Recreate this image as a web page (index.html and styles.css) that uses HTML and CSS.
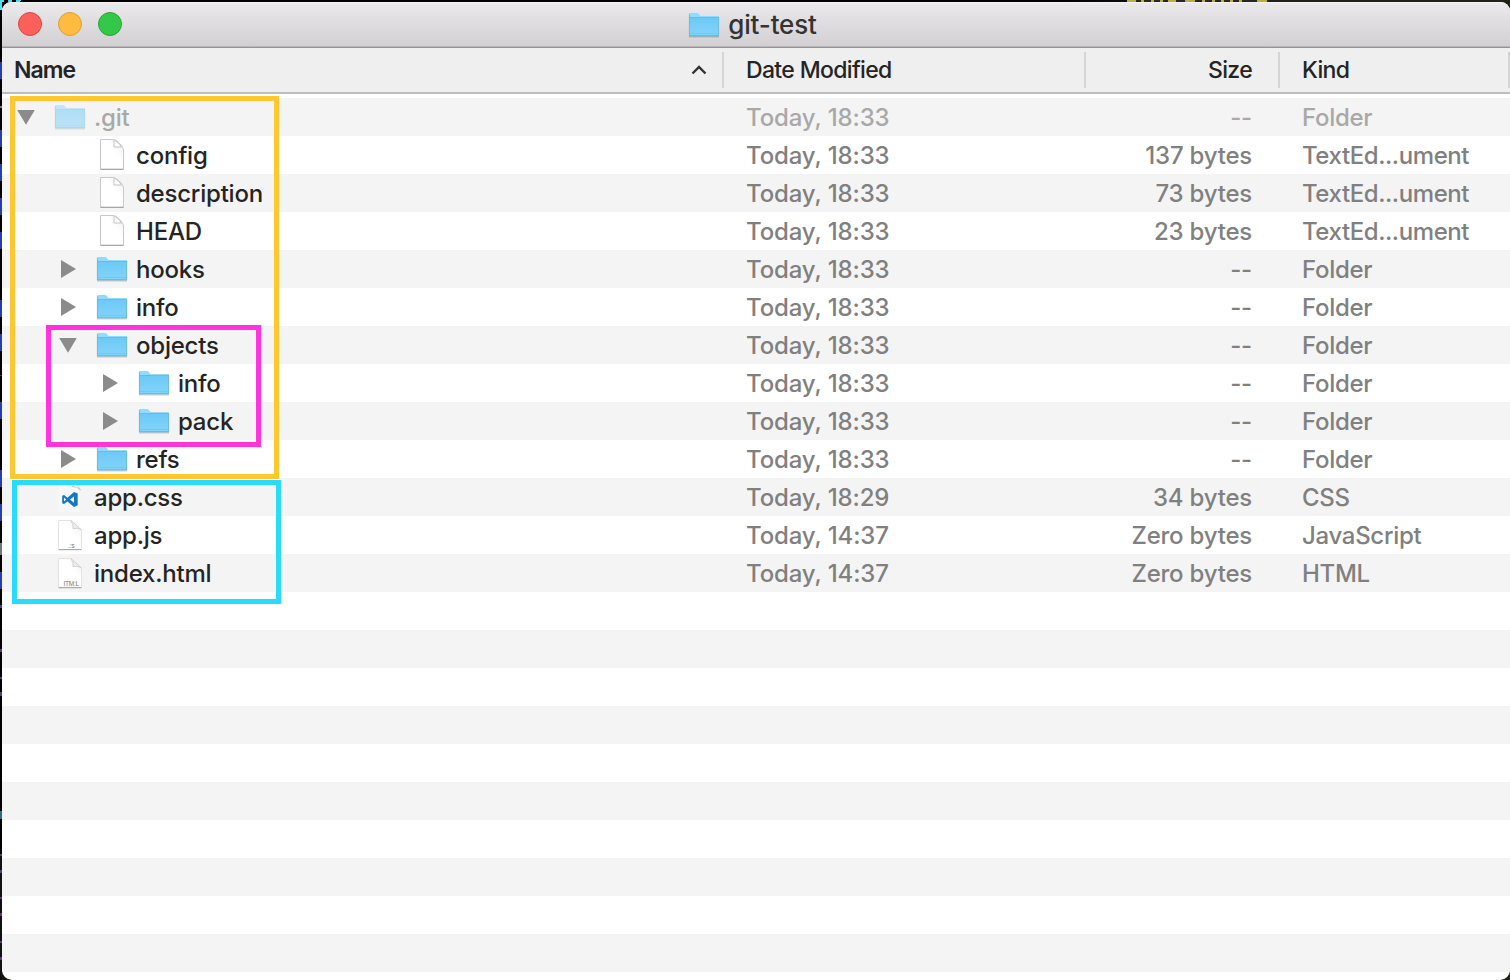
FILE: index.html
```
<!DOCTYPE html>
<html lang="en">
<head>
<meta charset="utf-8">
<title>git-test</title>
<link rel="stylesheet" href="styles.css">
</head>
<body>
<svg width="0" height="0" class="defs">
  <defs>
    <linearGradient id="fill" x1="0" y1="0" x2="0" y2="1"><stop offset="0" stop-color="#6dc9f6"/><stop offset="1" stop-color="#81d4fa"/></linearGradient>
    <linearGradient id="paper" x1="0" y1="1" x2="1" y2="0"><stop offset="0.6" stop-color="#fff"/><stop offset="1" stop-color="#f0f0f0"/></linearGradient>
    <symbol id="folder" viewBox="0 0 32 28">
      <path d="M1 25.8h30" stroke="#000" stroke-opacity=".16" stroke-width="1.6"/>
      <path d="M1 3.2Q1 2 2.2 2H9q1 0 1.700.8L12 4.400q.5.500 1.300.500H29.800Q31 4.900 31 6V24.500H1z" fill="#93dafb"/>
      <path d="M1 6.600H31V24.500H1z" fill="url(#fill)"/>
      <path d="M1 6.500H31" stroke="#62bdea"/>
      <path d="M1.300 22.500h29.400" stroke="#6fc6ee" stroke-width=".8"/>
      <path d="M1 24.800H31" stroke="#58add4"/>
      <path d="M1.400 3v21.500M30.600 6v18.500" stroke="#64b7df" stroke-width=".8"/>
    </symbol>
    <symbol id="file" viewBox="0 0 26 34">
      <path d="M1.500 1.500H14.500C18 2 24.500 8.500 24.500 12V31H1.500z" fill="url(#paper)" stroke="#c9c9c9"/>
      <path d="M1.500 31.500H24.500" stroke="#a6a6a6"/>
      <path d="M15 2V9h7.500C20.500 6 17.500 3 15 2z" fill="#fff" stroke="#c4c4c4"/>
    </symbol>
    <symbol id="page" viewBox="0 0 26 34">
      <path d="M1.500 2H14.500L24.500 11.500V31.500H1.500z" fill="url(#paper)"/>
      <path d="M1.500 31V3M24.500 11v20" stroke="#ddd" stroke-width=".8"/>
      <path d="M1.500 2.500H14" stroke="#e3e3e3"/>
      <path d="M1.500 31.700H24.500" stroke="#999"/>
      <path d="M14 2.500 24 11.500Q20 9.500 16 10.500 17 7 14 2.500z" fill="#ededed" stroke="#c9c9c9" stroke-width=".8"/>
    </symbol>
    <symbol id="right" viewBox="0 0 18 20"><path d="M2 1 17 10 2 19z" fill="#8b8b8b"/></symbol>
    <symbol id="down" viewBox="0 0 18 20"><path d="M.2 3H17.800L9 17.800z" fill="#8b8b8b"/></symbol>
  </defs>
</svg>
<div class="desktop">
  <i class="frag f1"></i><i class="frag f2"></i>
  <main class="window">
    <header class="titlebar">
      <div class="lights"><span class="light red"></span><span class="light amber"></span><span class="light green"></span></div>
      <h1 class="title"><svg class="folder"><use href="#folder"/></svg><span>git-test</span></h1>
    </header>
    <div class="grid heads">
      <div class="head sorted"><span>Name</span><svg class="caret" viewBox="0 0 16 10"><path d="M1.500 8.500 8 2l6.500 6.500" fill="none" stroke="#333" stroke-width="2.400"/></svg></div>
      <div class="head"><span class="hd">Date Modified</span></div>
      <div class="head num"><span class="hd">Size</span></div>
      <div class="head"><span class="hd">Kind</span></div>
    </div>
    <div class="rows">
      <div class="grid row dim"><div class="name"><svg class="tri"><use href="#down"/></svg><svg class="folder"><use href="#folder"/></svg><span>.git</span></div><div class="date">Today, 18:33</div><div class="num">--</div><div class="kind">Folder</div></div>
      <div class="grid row"><div class="name d1"><i class="tri"></i><svg class="file"><use href="#file"/></svg><span>config</span></div><div class="date">Today, 18:33</div><div class="num">137 bytes</div><div class="kind doc">TextEd...ument</div></div>
      <div class="grid row"><div class="name d1"><i class="tri"></i><svg class="file"><use href="#file"/></svg><span>description</span></div><div class="date">Today, 18:33</div><div class="num">73 bytes</div><div class="kind doc">TextEd...ument</div></div>
      <div class="grid row"><div class="name d1"><i class="tri"></i><svg class="file"><use href="#file"/></svg><span>HEAD</span></div><div class="date">Today, 18:33</div><div class="num">23 bytes</div><div class="kind doc">TextEd...ument</div></div>
      <div class="grid row"><div class="name d1"><svg class="tri"><use href="#right"/></svg><svg class="folder"><use href="#folder"/></svg><span>hooks</span></div><div class="date">Today, 18:33</div><div class="num">--</div><div class="kind">Folder</div></div>
      <div class="grid row"><div class="name d1"><svg class="tri"><use href="#right"/></svg><svg class="folder"><use href="#folder"/></svg><span>info</span></div><div class="date">Today, 18:33</div><div class="num">--</div><div class="kind">Folder</div></div>
      <div class="grid row"><div class="name d1"><svg class="tri"><use href="#down"/></svg><svg class="folder"><use href="#folder"/></svg><span>objects</span></div><div class="date">Today, 18:33</div><div class="num">--</div><div class="kind">Folder</div></div>
      <div class="grid row"><div class="name d2"><svg class="tri"><use href="#right"/></svg><svg class="folder"><use href="#folder"/></svg><span>info</span></div><div class="date">Today, 18:33</div><div class="num">--</div><div class="kind">Folder</div></div>
      <div class="grid row"><div class="name d2"><svg class="tri"><use href="#right"/></svg><svg class="folder"><use href="#folder"/></svg><span>pack</span></div><div class="date">Today, 18:33</div><div class="num">--</div><div class="kind">Folder</div></div>
      <div class="grid row"><div class="name d1"><svg class="tri"><use href="#right"/></svg><svg class="folder"><use href="#folder"/></svg><span>refs</span></div><div class="date">Today, 18:33</div><div class="num">--</div><div class="kind">Folder</div></div>
      <div class="grid row"><div class="name"><i class="tri"></i><svg class="file" viewBox="0 0 26 34"><path d="M1.500 5h22v26.500h-22z" fill="#fafafa" opacity=".5"/><path d="M15 6.500Q20 6 23.500 10L20 5H17z" fill="#fff" stroke="#b5b5b5" stroke-width=".7"/><path fill="#1278c4" fill-rule="evenodd" d="M17 12 20.700 13.600V25.300L17 27 10.500 21.500 7 24 5.200 23.200V15.800L7 15 10.500 17.700zM17 16.500 13 19.600 17 22.700zM7 17.500V21.500L9.100 19.500z"/></svg><span>app.css</span></div><div class="date">Today, 18:29</div><div class="num">34 bytes</div><div class="kind">CSS</div></div>
      <div class="grid row"><div class="name"><i class="tri"></i><svg class="file" viewBox="0 0 26 34"><use href="#page"/><text x="11" y="29.500" class="tag">.:s</text></svg><span>app.js</span></div><div class="date">Today, 14:37</div><div class="num">Zero bytes</div><div class="kind">JavaScript</div></div>
      <div class="grid row"><div class="name"><i class="tri"></i><svg class="file" viewBox="0 0 26 34"><use href="#page"/><text x="6.500" y="29.800" class="tag">ITM:L</text></svg><span>index.html</span></div><div class="date">Today, 14:37</div><div class="num">Zero bytes</div><div class="kind">HTML</div></div>
    </div>
  </main>
  <div class="mark gold"></div><div class="mark pink"></div><div class="mark cyan"></div>
</div>
</body>
</html>
```
FILE: styles.css
```
* { box-sizing: border-box; }
body { margin: 0; font-family: Inter, "Liberation Sans", sans-serif; }
.defs { position: absolute; }
.desktop {
  position: relative; width: 1510px; height: 980px; padding: 2px 0 0 2px; overflow: hidden;
  background:
    linear-gradient(#45e8ee 0 10px, #000 10px 62px, #263fae 62px 79px, #000 79px 106px, #777 106px 108px, #000 108px 130px,
      #263fae 130px 147px, #000 147px 164px, #263fae 164px 181px, #000 181px 198px, #263fae 198px 215px, #000 215px 232px,
      #263fae 232px 249px, #000 249px 300px, #263fae 300px 317px, #000 317px 334px, #263fae 334px 351px, #000 351px 375px,
      #702a35 375px 376px, #000 376px 402px, #263fae 402px 419px, #000 419px 470px, #263fae 470px 487px, #000 487px 504px,
      #263fae 504px 521px, #000 521px 543px, #6c7880 543px 555px, #000 555px 572px, #263fae 572px 589px, #000 589px 605px,
      #5b3a7c 605px 608px, #000 608px 649px, #5b3a7c 649px 652px, #000 652px 677px, #5b3a7c 677px 679px, #000 679px 692px,
      #5b3a7c 692px 696px, #000 696px 811px, #2b6a88 811px 819px, #000 819px 854px, #5b3a7c 854px 856px, #111 856px 870px,
      #5b3a7c 870px 873px, #111 873px 897px, #5b3a7c 897px 899px, #111 899px 913px, #5b3a7c 913px 916px, #111 916px 941px,
      #5b3a7c 941px 943px, #111 943px 957px, #5b3a7c 957px 960px, #111 960px) 0 0 / 2px 980px no-repeat,
    linear-gradient(90deg, #15150f 0 70%, #20221a 82%) 0 100% / 100% 40px no-repeat,
    linear-gradient(90deg, #000 0 70%, #20221a 82%);
}
.frag { position: absolute; top: 0; height: 2px; }
.f1 { left: 0; width: 24px; background: repeating-linear-gradient(105deg, #45dfe4 0 4px, #000 4px 8px); }
.f2 { left: 1127px; width: 141px; background: linear-gradient(90deg, #b8ad4b 0 9px, #27271a 9px 14px, #b8ad4b 14px 17px, #27271a 17px 24px, #b8ad4b 24px 27px, #27271a 27px 33px, #b8ad4b 33px 36px, #27271a 36px 41px, #b8ad4b 41px 49px, #27271a 49px 58px, #b8ad4b 58px 68px, #27271a 68px 75px, #b8ad4b 75px 78px, #27271a 78px 85px, #b8ad4b 85px 88px, #27271a 88px 94px, #b8ad4b 94px 97px, #27271a 97px 103px, #b8ad4b 103px 106px, #27271a 106px 112px, #b8ad4b 112px 115px, #27271a 115px 130px, #b8ad4b 130px 140px, #27271a 140px); }
.window { height: 978px; background: #fff; border-radius: 9px 9px 10px 10px; overflow: hidden; }
.titlebar {
  display: grid; grid-template-columns: 1fr auto 1fr; align-items: center; height: 46px;
  background: linear-gradient(#f6f5f6 0, #eae8ea 2px, #d2d0d2 44px, #b9b6b9 44px, #b9b6b9 45px, #969296 45px);
}
.lights { display: flex; gap: 16px; padding: 0 0 2px 16px; }
.light { width: 24px; height: 24px; border-radius: 50%; border: 1px solid; }
.red { background: #fc605c; border-color: #e2443f; }
.amber { background: #fdbc40; border-color: #dfa034; }
.green { background: #34c84a; border-color: #24a932; }
.title { display: flex; align-items: center; gap: 8px; margin: 0; padding: 0 7px 1px 0; font-size: 26px; font-weight: 450; color: #333; height: 46px; }
.title span { letter-spacing: -.15px; }
.folder { width: 32px; height: 28px; flex: none; }
.grid { display: grid; grid-template-columns: 722px 362px 194px 1fr; }
.heads { height: 46px; padding: 4px 0; background: #efefef; border-bottom: 2px solid #bebebe; font-size: 23px; font-weight: 450; color: #242424; }
.head { display: flex; align-items: center; padding-left: 22px; border-right: 2px solid #d5d5d5; height: 36px; }
.sorted { justify-content: space-between; padding: 0 15px 0 12px; font-weight: 600; letter-spacing: -.95px; }
.caret { width: 16px; height: 10px; }
.hd { letter-spacing: -.65px; }
.rows {
  margin-top: 4px; height: 874px; font-size: 24px; font-weight: 450; line-height: 40px; letter-spacing: -.22px; color: #808080; white-space: nowrap;
  background: repeating-linear-gradient(#f4f4f4 0 38px, #fff 38px 76px);
}
.row { height: 38px; }
.row > div { height: 38px; padding-left: 22px; }
.row > .name { display: flex; align-items: center; padding-left: 15px; color: #242424; }
.name span { padding-top: 1px; }
.row > .d1 { padding-left: 57px; }
.row > .d2 { padding-left: 99px; }
.row > .date { letter-spacing: -.13px; }
.row > .kind { letter-spacing: -.3px; }
.row > .doc { letter-spacing: -.42px; }
.tri { width: 18px; height: 20px; flex: none; margin-right: 19px; }
.name .folder { margin-right: 8px; }
.file { width: 26px; height: 34px; flex: none; margin: 0 11px 0 3px; }
.row > .num { text-align: right; padding: 0 28px 0 0; }
.head.num { justify-content: flex-end; padding: 0 26px 0 0; }
.dim, .dim > .name { color: #a8a8a8; }
.dim .folder { opacity: .5; }
.tag { font: 6.500px "Liberation Sans", sans-serif; fill: #777; }
.mark { position: absolute; border: 5px solid; }
.gold { left: 10px; top: 96px; width: 269px; height: 383px; border-color: #ffc72f; }
.pink { left: 46px; top: 325px; width: 215px; height: 122px; border-color: #ff34dc; }
.cyan { left: 12px; top: 480px; width: 269px; height: 124px; border-color: #29dbff; }
```
